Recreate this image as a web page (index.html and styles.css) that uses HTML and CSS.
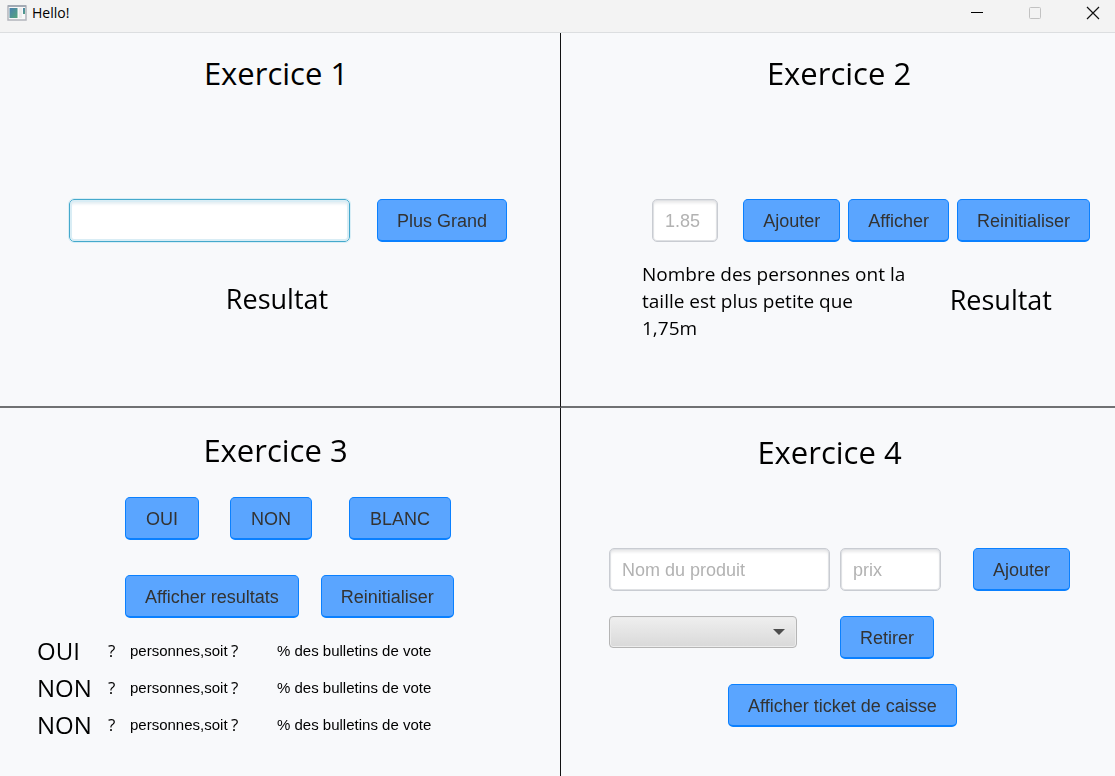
FILE: index.html
```html
<!DOCTYPE html>
<html lang="fr">
<head>
<meta charset="utf-8">
<title>Hello!</title>
<link rel="stylesheet" href="styles.css">
</head>
<body>
<header class="titlebar">
  <svg class="app-icon" width="20" height="16" viewBox="0 0 20 16" aria-hidden="true">
    <defs>
      <linearGradient id="pane" x1="0" y1="0" x2="1" y2="1"><stop offset="0" stop-color="#4a7fb0"/><stop offset="1" stop-color="#55a67c"/></linearGradient>
    </defs>
    <rect x="1" y="1" width="18" height="14" fill="#f8f8f8" stroke="#b3b5bc" stroke-width="1.5"/>
    <rect x="1" y="0" width="18" height="2" fill="#a3aab4"/>
    <rect x="2.5" y="3" width="8" height="10" fill="url(#pane)"/>
    <rect x="12" y="3" width="3" height="10" fill="#ececec"/>
    <rect x="16" y="3" width="2" height="6" fill="url(#pane)"/>
  </svg>
  <span class="window-title">Hello!</span>
  <div class="window-controls">
    <button class="window-button" type="button" aria-label="Réduire"><svg width="14" height="14" viewBox="0 0 14 14"><path d="M1 6.5h12" stroke="#000"/></svg></button>
    <button class="window-button" type="button" aria-label="Agrandir" disabled><svg width="14" height="14" viewBox="0 0 14 14"><rect x="1.5" y="1.5" width="11" height="11" rx="1" fill="none" stroke="#c2c2c2"/></svg></button>
    <button class="window-button" type="button" aria-label="Fermer"><svg width="14" height="14" viewBox="0 0 14 14"><path d="M1 1l12 12M13 1L1 13" stroke="#111" stroke-width="1.2"/></svg></button>
  </div>
</header>
<main class="board">
  <section class="panel panel-one">
    <h1 class="heading">Exercice 1</h1>
    <div class="row row-number">
      <input class="field field-grow" type="text" aria-label="Nombre" autofocus>
      <button class="button" type="button">Plus Grand</button>
    </div>
    <p class="result">Resultat</p>
  </section>

  <section class="panel panel-two">
    <h1 class="heading">Exercice 2</h1>
    <div class="row row-height">
      <input class="field field-small" type="text" placeholder="1.85" aria-label="Taille">
      <div class="row actions">
        <button class="button" type="button">Ajouter</button>
        <button class="button" type="button">Afficher</button>
        <button class="button" type="button">Reinitialiser</button>
      </div>
    </div>
    <div class="row row-summary">
      <p class="summary">Nombre des personnes ont la taille est plus petite que 1,75m</p>
      <p class="result">Resultat</p>
    </div>
  </section>

  <section class="panel panel-three">
    <h1 class="heading">Exercice 3</h1>
    <div class="row row-votes">
      <button class="button button-vote" type="button">OUI</button>
      <button class="button button-vote" type="button">NON</button>
      <button class="button button-vote button-blank" type="button">BLANC</button>
    </div>
    <div class="row row-totals">
      <button class="button" type="button">Afficher resultats</button>
      <button class="button" type="button">Reinitialiser</button>
    </div>
    <table class="votes">
      <tbody>
        <tr><th class="vote-name" scope="row">OUI</th><td class="vote-count">?</td><td class="vote-people">personnes,soit</td><td class="vote-share">?</td><td>% des bulletins de vote</td></tr>
        <tr><th class="vote-name" scope="row">NON</th><td class="vote-count">?</td><td class="vote-people">personnes,soit</td><td class="vote-share">?</td><td>% des bulletins de vote</td></tr>
        <tr><th class="vote-name" scope="row">NON</th><td class="vote-count">?</td><td class="vote-people">personnes,soit</td><td class="vote-share">?</td><td>% des bulletins de vote</td></tr>
      </tbody>
    </table>
  </section>

  <section class="panel panel-four">
    <h1 class="heading">Exercice 4</h1>
    <div class="products">
      <input class="field product-name" type="text" placeholder="Nom du produit" aria-label="Nom du produit">
      <input class="field" type="text" placeholder="prix" aria-label="prix">
      <button class="button product-add" type="button">Ajouter</button>
      <div class="picker"><select class="select" aria-label="Produit"><option></option></select></div>
      <button class="button product-remove" type="button">Retirer</button>
    </div>
    <div class="row row-ticket">
      <button class="button" type="button">Afficher ticket de caisse</button>
    </div>
  </section>
</main>
</body>
</html>
```
FILE: styles.css
```css
* { box-sizing: border-box; }

body {
  margin: 0;
  min-height: 100vh;
  display: flex;
  flex-direction: column;
  background: #f8f9fb;
  color: #000;
  font-family: "Open Sans", "Noto Sans", sans-serif;
}

.titlebar {
  display: flex;
  align-items: center;
  height: 33px;
  padding: 0 8px 6px 7px;
  background: #f3f3f3;
  border-bottom: 1px solid #dcdee0;
}

.app-icon { margin-right: 5px; }
.window-title { font-size: 14px; line-height: 20px; }
.window-controls { display: flex; gap: 30px; margin-left: auto; }

.window-button {
  display: flex;
  padding: 0 7px;
  border: 0;
  background: none;
}

.board {
  flex: 1;
  display: grid;
  grid-template-columns: 561fr 554fr;
  grid-template-rows: 375fr 368fr;
}

.panel { min-width: 0; }
.panel-one, .panel-three { border-right: 1px solid #111; }
.panel-one, .panel-two { border-bottom: 2px solid #707173; }
.panel-one { padding: 16px 53px 0 69px; }
.panel-two { padding: 16px 25px 0 81px; }
.panel-three { padding: 18px 0 0 37px; }
.panel-four { padding: 20px 45px 0 48px; }

.heading {
  margin: 0;
  font-size: 31px;
  font-weight: 400;
  line-height: 48px;
  text-align: center;
}

.panel-one .heading { padding-right: 24px; }
.panel-two .heading { padding-right: 54px; }
.panel-three .heading { padding-right: 46px; }
.panel-four .heading { padding-right: 20px; }

.row { display: flex; align-items: flex-start; }
.row-number { gap: 27px; margin-top: 102px; }
.row-height { justify-content: space-between; margin-top: 102px; padding-left: 10px; }
.actions { gap: 8px; }
.row-summary { justify-content: space-between; margin-top: 19px; padding-right: 38px; }
.row-votes { gap: 31px; margin-top: 23px; padding-left: 88px; }
.row-totals { gap: 22px; margin-top: 35px; padding-left: 88px; }
.row-ticket { justify-content: center; margin-top: 25px; padding-left: 6px; }

.button {
  height: 43px;
  padding: 1px 19px 0;
  border: 1px solid #0a80ff;
  border-bottom-width: 2px;
  border-radius: 5px;
  background: #5aa5ff;
  color: #333;
  font: 18px/38px "Liberation Sans", Arial, sans-serif;
  white-space: nowrap;
}

.button-vote { padding: 1px 20px 0; }
.button-blank { margin-left: 6px; }

.field {
  width: 100%;
  min-width: 0;
  height: 43px;
  padding: 1px 12px 0;
  border: 1px solid #c9ccd2;
  border-radius: 5px;
  background: #fff;
  box-shadow: inset 0 0 0 1px #dfe1e4, inset 0 3px 3px #e9e9ea;
  color: #333;
  font: 18px "Liberation Sans", Arial, sans-serif;
}

.field::placeholder { color: #b2b2b2; opacity: 1; }
.field-grow { flex: 1; }
.field-small { width: 66px; }

.field:focus {
  outline: 1px solid #d9eef6;
  border: 1px solid #45a9cc;
  box-shadow: inset 0 0 0 2px #d9edf5, inset 0 4px 3px #e4eef3;
}

.result {
  margin: 0;
  font-size: 27px;
  line-height: 40px;
}

.panel-one .result { margin-top: 37px; padding-right: 22px; text-align: center; }
.panel-two .result { margin-top: 19px; }

.summary {
  width: 270px;
  margin: 0;
  font-size: 19px;
  line-height: 27px;
}

.votes {
  margin-top: 14px;
  border-collapse: collapse;
  font: 15px/20px "Liberation Sans", Arial, sans-serif;
}

.votes tr { height: 37px; }
.votes td, .votes th { padding: 0; white-space: nowrap; }

.vote-name {
  width: 71px;
  font: 400 24px/30px "Open Sans", "Noto Sans", sans-serif;
  text-align: left;
}

.vote-count, .vote-share { font: 17px/24px "Open Sans", "Noto Sans", sans-serif; }
.vote-count { width: 22px; }
.vote-people { width: 101px; }
.vote-share { width: 46px; }

.products {
  display: grid;
  grid-template-columns: 221fr 101fr 119fr;
  column-gap: 10px;
  row-gap: 25px;
  margin-top: 72px;
  align-items: start;
}

.product-add { justify-self: end; }
.product-remove { justify-self: start; }

.picker { position: relative; margin-right: 33px; }

.picker::after {
  content: "";
  position: absolute;
  top: 13px;
  right: 12px;
  border: 6px solid transparent;
  border-top-color: #4d4d4d;
  border-bottom: 0;
  pointer-events: none;
}

.select {
  display: block;
  width: 100%;
  height: 32px;
  border: 1px solid #b5b5b5;
  border-radius: 4px;
  appearance: none;
  background: linear-gradient(#efefef, #d9d9d9);
  box-shadow: inset 0 0 0 1px #ececec;
}
```
